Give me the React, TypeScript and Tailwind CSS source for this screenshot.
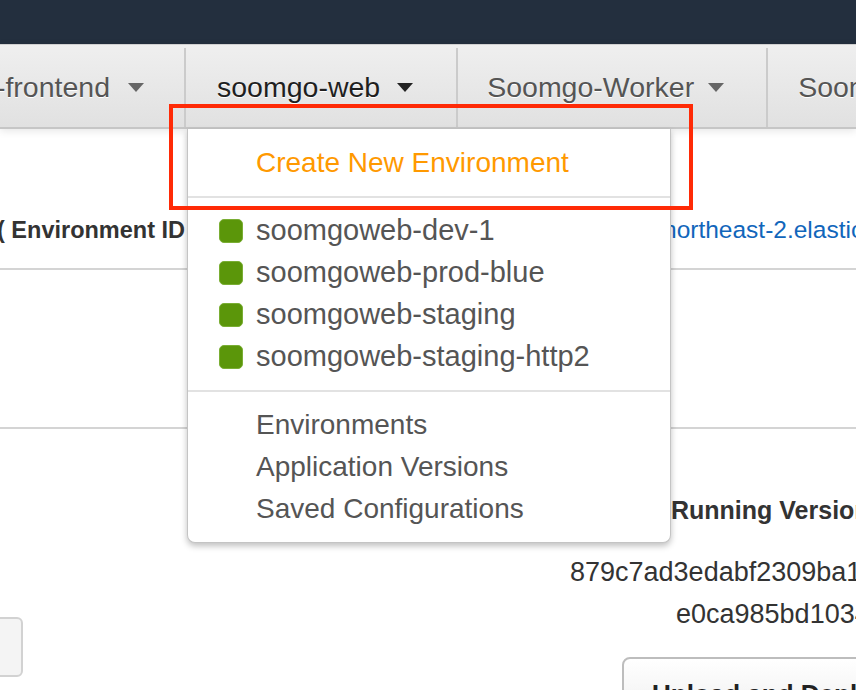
import React from "react";

const Caret = ({ color }: { color: string }) => (
  <svg width="16" height="9" viewBox="0 0 16 9" className="shrink-0">
    <polygon points="0,0 16,0 8,9" fill={color} />
  </svg>
);

const envs = [
  "soomgoweb-dev-1",
  "soomgoweb-prod-blue",
  "soomgoweb-staging",
  "soomgoweb-staging-http2",
];

const links = ["Environments", "Application Versions", "Saved Configurations"];

const App = () => {
  return (
    <div className="relative h-[690px] w-[856px] overflow-hidden bg-white font-['Liberation_Sans',Helvetica,Arial,sans-serif]">
      <div className="h-[44px] bg-[#232f3e]" />

      <div className="relative z-10 flex h-[85px] border-t border-[#d0d0d0] border-b-2 border-b-[#c6c6c6] bg-gradient-to-b from-[#efefef] to-[#e1e1e1] pt-[3px] text-[28.5px] shadow-[0_2px_8px_rgba(0,0,0,0.10)] [text-shadow:0_1px_0_#fff]">
        <div className="flex w-[186px] shrink-0 items-center justify-end gap-[18px] overflow-hidden border-r-2 border-[#cbcbcb] pr-[40px] text-[#555]">
          <span className="shrink-0 whitespace-nowrap">soomgo-frontend</span>
          <Caret color="#666" />
        </div>
        <div className="flex shrink-0 items-center gap-[17px] border-r-2 border-[#cbcbcb] pl-[31px] pr-[43px] text-[#1f1f1f]">
          <span className="whitespace-nowrap">soomgo-web</span>
          <Caret color="#222" />
        </div>
        <div className="flex shrink-0 items-center gap-[14px] border-r-2 border-[#cbcbcb] pl-[29px] pr-[42px] text-[#555]">
          <span className="whitespace-nowrap">Soomgo-Worker</span>
          <Caret color="#666" />
        </div>
        <div className="flex shrink-0 items-center gap-[15px] pl-[30px] text-[#555]">
          <span className="whitespace-nowrap">Soomgo-Admin</span>
          <Caret color="#666" />
        </div>
      </div>

      <div className="text-[#333]">
        <div className="flex h-[141px] items-end border-b-2 border-[#d4d4d4] pb-[17px]">
          <div className="flex whitespace-nowrap text-[23.5px] leading-[42px]">
            <span className="-ml-[3px] w-[666px] shrink-0 overflow-hidden font-bold">
              ( Environment ID &nbsp;e-mpx3vhcw2k, URL: soomgoweb-dev-1.ap-
            </span>
            <span className="text-[24.5px] text-[#1166bb]">northeast-2.elasticbeanstalk.com</span>
          </div>
        </div>
        <div className="h-[159px] border-b-2 border-[#d4d4d4]" />
        <div className="flex">
          <div className="w-[570px] shrink-0 pt-[188px]">
            <div className="-ml-[40px] h-[60px] w-[63px] rounded-md border-2 border-[#d2d2d2] bg-[#f4f4f4]" />
          </div>
          <div className="flex flex-col whitespace-nowrap pt-[60px]">
            <div className="pl-[101px] text-[25px] font-bold leading-[42px]">Running Version</div>
            <div className="mt-[20px] text-[27px] leading-[42px]">879c7ad3edabf2309ba1</div>
            <div className="pl-[106px] text-[27px] leading-[42px]">e0ca985bd1034</div>
            <div className="ml-[52px] mt-[22px] rounded-t-lg border-2 border-[#bdbdbd] bg-gradient-to-b from-white to-[#ececec] px-[28px] pt-[16px] pb-[16px] text-[26px] font-bold text-[#222]">
              Upload and Deploy
            </div>
          </div>
        </div>
      </div>

      <div className="absolute left-[187px] top-[129px] z-20 w-[484px] rounded-b-lg border-x border-b border-[#c4c4c4] bg-white text-[28px] text-[#555] shadow-[0_3px_6px_rgba(0,0,0,0.25)]">
        <div className="flex h-[67px] items-center pl-[68px] text-[#f90]">Create New Environment</div>
        <div className="h-[2px] bg-[#e2e2e2]" />
        <div className="pt-[12px] pb-[12px] text-[29px]">
          {envs.map((e) => (
            <div key={e} className="flex h-[42px] items-center gap-[13px] pl-[31px]">
              <span className="h-[24px] w-[24px] shrink-0 rounded-[5px] border border-[#7aae34] bg-[#5b960a]" />
              <span>{e}</span>
            </div>
          ))}
        </div>
        <div className="h-[2px] bg-[#e2e2e2]" />
        <div className="pt-[12px] pb-[12px]">
          {links.map((l) => (
            <div key={l} className="flex h-[42px] items-center pl-[68px]">
              {l}
            </div>
          ))}
        </div>
      </div>

      <div className="absolute left-[169px] top-[104px] z-30 h-[106px] w-[524px] border-4 border-[#ff2a06]" />
    </div>
  );
};

export default App;
